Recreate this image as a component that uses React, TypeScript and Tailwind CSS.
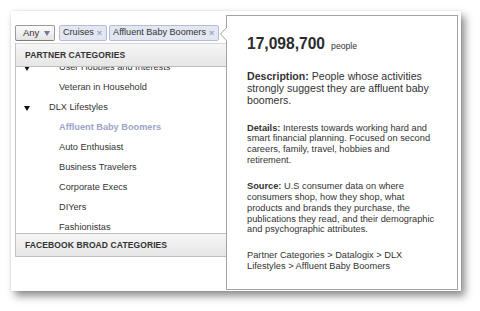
import React from 'react';

type Row = { label: string; child?: boolean; caret?: boolean; selected?: boolean };

const ROWS: Row[] = [
  { label: 'User Hobbies and Interests', child: true, caret: true },
  { label: 'Veteran in Household', child: true },
  { label: 'DLX Lifestyles', caret: true },
  { label: 'Affluent Baby Boomers', child: true, selected: true },
  { label: 'Auto Enthusiast', child: true },
  { label: 'Business Travelers', child: true },
  { label: 'Corporate Execs', child: true },
  { label: 'DIYers', child: true },
  { label: 'Fashionistas', child: true },
];

function Caret({ className }: { className?: string }) {
  return (
    <svg width="6" height="5" viewBox="0 0 6 5" className={className}>
      <polygon points="0,0 6,0 3,5" fill="currentColor" />
    </svg>
  );
}

function Token({ label }: { label: string }) {
  return (
    <div className="flex h-[16px] items-center rounded-[2px] border border-[#b3bdd6] bg-[#e2e7f1] pl-[3px] pr-[4px] text-[9.1px] text-[#333]">
      <span>{label}</span>
      <span className="ml-[3px] text-[9px] font-bold leading-none text-[#9aa5c2]">×</span>
    </div>
  );
}

function SectionHeader({ label, top }: { label: string; top?: boolean }) {
  return (
    <div
      className={`flex h-[24px] items-center border-b border-[#bdbdbd] bg-gradient-to-b from-[#f6f6f6] to-[#e6e6e6] pl-[9px] text-[8.5px] font-bold tracking-[0.1px] text-[#333] ${
        top ? 'border-t border-t-[#d6d6d6]' : 'border-t border-t-[#bdbdbd]'
      }`}
    >
      {label}
    </div>
  );
}

export default function App() {
  return (
    <div className="h-[311px] w-[480px] overflow-hidden bg-white pl-[11px] pt-[11px] font-['Liberation_Sans',Arial,sans-serif]">
      <div className="flex h-[280px] w-[450px] bg-white shadow-[4px_5px_8px_rgba(0,0,0,0.45),0_0_2px_rgba(0,0,0,0.12)]">
        {/* Left: filter + category list */}
        <div className="w-[215px] pl-[4px] pt-[14px]">
          <div className="flex h-[16px] items-center">
            <div className="flex h-[16px] w-[40px] items-center rounded-[2px] border border-[#9a9a9a] border-b-[#7d7d7d] bg-gradient-to-b from-[#fbfbfb] to-[#e4e4e4] pl-[7px] text-[9.5px] text-[#333]">
              <span>Any</span>
              <Caret className="ml-[5px] text-[#6b7a9e]" />
            </div>
            <div className="ml-[4px] flex gap-[2px]">
              <Token label="Cruises" />
              <Token label="Affluent Baby Boomers" />
            </div>
          </div>

          <div className="mt-[2px] border-l border-[#c4c4c4]">
            <SectionHeader label="PARTNER CATEGORIES" top />
            {/* list is scrolled a little, first row sits under the header */}
            <div className="h-[166px] overflow-hidden">
              <div className="-mt-[9px]">
                {ROWS.map(r => (
                  <div key={r.label} className="flex h-[20px] items-center pl-[8px]">
                    <div className="w-[25px]">{r.caret && <Caret className="text-[#111]" />}</div>
                    <span
                      className={`${r.child ? 'ml-[10px]' : ''} text-[9.2px] ${
                        r.selected ? 'font-bold text-[#9ba4c8]' : 'text-[#333]'
                      }`}
                    >
                      {r.label}
                    </span>
                  </div>
                ))}
              </div>
            </div>
            <SectionHeader label="FACEBOOK BROAD CATEGORIES" />
          </div>
        </div>

        {/* Right: popover */}
        <div className="relative mt-[4px] h-[275px] w-[232px] border border-[#a3a3a3] bg-white pl-[20px] pt-[19px] text-[#333]">
          <svg width="7" height="14" viewBox="0 0 7 14" className="absolute -left-[7px] top-[11px]">
            <polygon points="7,0 0.5,7 7,14" fill="#ffffff" />
            <polyline points="7,0 0.5,7 7,14" fill="none" stroke="#a3a3a3" strokeWidth="1" />
          </svg>
          <div className="leading-[18px]">
            <span className="text-[15.6px] font-bold text-[#2b2b2b]">17,098,700</span>
            <span className="ml-[6px] text-[8.7px]">people</span>
          </div>
          <p className="mt-[15px] text-[10.6px] leading-[12.2px]">
            <b>Description:</b> People whose activities
            <br />
            strongly suggest they are affluent baby
            <br />
            boomers.
          </p>
          <p className="mt-[16px] text-[9.25px] leading-[10.8px]">
            <b>Details:</b> Interests towards working hard and
            <br />
            smart financial planning. Focused on second
            <br />
            careers, family, travel, hobbies and
            <br />
            retirement.
          </p>
          <p className="mt-[15px] text-[9.25px] leading-[10.9px]">
            <b>Source:</b> U.S consumer data on where
            <br />
            consumers shop, how they shop, what
            <br />
            products and brands they purchase, the
            <br />
            publications they read, and their demographic
            <br />
            and psychographic attributes.
          </p>
          <p className="mt-[15px] text-[9.25px] leading-[10.8px]">
            Partner Categories &gt; Datalogix &gt; DLX
            <br />
            Lifestyles &gt; Affluent Baby Boomers
          </p>
        </div>
      </div>
    </div>
  );
}
